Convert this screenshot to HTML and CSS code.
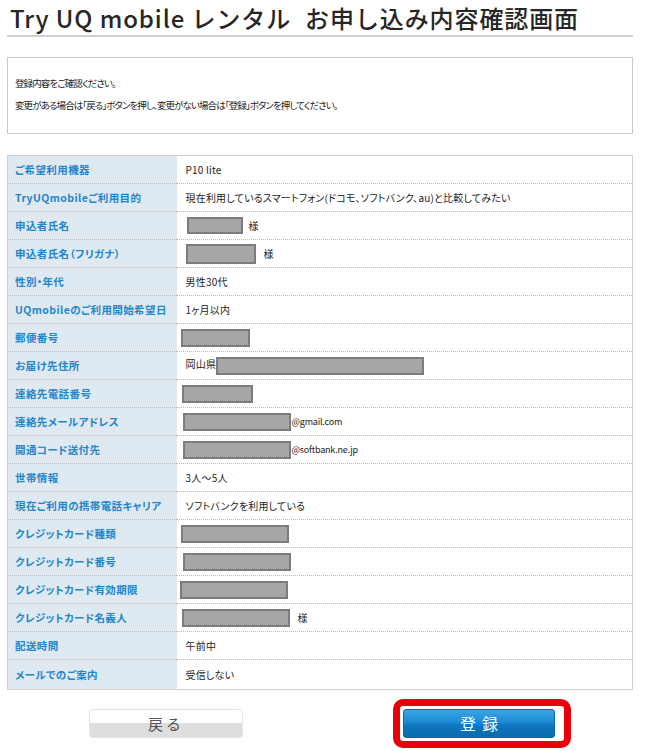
FILE: index.html
```html
<!DOCTYPE html>
<html lang="ja">
<head>
<meta charset="utf-8">
<title>Try UQ mobile レンタル お申し込み内容確認画面</title>
<link rel="stylesheet" href="styles.css">
</head>
<body>
<div class="page">
  <h1 class="title"><span>Try UQ mobile レンタル</span><span class="title-sub">お申し込み内容確認画面</span></h1>

  <div class="notice">
    <p>登録内容をご確認ください。</p>
    <p>変更がある場合は「戻る」ボタンを押し、変更がない場合は「登録」ボタンを押してください。</p>
  </div>

  <table class="confirm">
    <tr><th>ご希望利用機器</th><td>P10 lite</td></tr>
    <tr><th>TryUQmobileご利用目的</th><td>現在利用しているスマートフォン(ドコモ、ソフトバンク、au)と比較してみたい</td></tr>
    <tr><th>申込者氏名</th><td><span class="redact r-name"></span><span class="sama">様</span></td></tr>
    <tr><th>申込者氏名（フリガナ）</th><td><span class="redact r-kana"></span><span class="sama sama-wide">様</span></td></tr>
    <tr><th>性別・年代</th><td>男性30代</td></tr>
    <tr><th>UQmobileのご利用開始希望日</th><td>1ヶ月以内</td></tr>
    <tr><th>郵便番号</th><td><span class="redact r-zip"></span></td></tr>
    <tr><th>お届け先住所</th><td>岡山県<span class="redact r-addr"></span></td></tr>
    <tr><th>連絡先電話番号</th><td><span class="redact r-tel"></span></td></tr>
    <tr><th>連絡先メールアドレス</th><td><span class="redact r-mail"></span><span class="domain">@gmail.com</span></td></tr>
    <tr><th>開通コード送付先</th><td><span class="redact r-mail"></span><span class="domain">@softbank.ne.jp</span></td></tr>
    <tr><th>世帯情報</th><td>3人～5人</td></tr>
    <tr><th>現在ご利用の携帯電話キャリア</th><td>ソフトバンクを利用している</td></tr>
    <tr><th>クレジットカード種類</th><td><span class="redact r-card r-left"></span></td></tr>
    <tr><th>クレジットカード番号</th><td><span class="redact r-card"></span></td></tr>
    <tr><th>クレジットカード有効期限</th><td><span class="redact r-card r-lefter"></span></td></tr>
    <tr><th>クレジットカード名義人</th><td><span class="redact r-card r-left2"></span><span class="sama sama-card">様</span></td></tr>
    <tr><th>配送時間</th><td>午前中</td></tr>
    <tr class="last"><th>メールでのご案内</th><td>受信しない</td></tr>
  </table>

  <div class="actions">
    <button class="btn-back" type="button">戻る</button>
    <div class="highlight">
      <button class="btn-submit" type="button">登録</button>
    </div>
  </div>
</div>
</body>
</html>
```

FILE: styles.css
```css
* { box-sizing: border-box; }

body {
  margin: 0;
  background: #fff;
  font-family: "Noto Sans CJK JP", "Noto Sans", sans-serif;
  color: #333;
}

.page {
  width: 626px;
  margin-left: 7px;
}

.title {
  margin: 0;
  padding: 0 0 0 3px;
  font-size: 24px;
  line-height: 35px;
  font-weight: 500;
  color: #262626;
  letter-spacing: 0.9px;
  border-bottom: 2px solid #cfcfcf;
  white-space: nowrap;
}

.title-sub {
  margin-left: 14px;
}

.notice {
  margin-top: 20px;
  height: 77px;
  border: 1px solid #c9c9c9;
  padding: 14px 7px 0;
  font-size: 9.5px;
  line-height: 22px;
  color: #222;
  font-feature-settings: "palt";
  letter-spacing: -0.9px;
}

.notice p { margin: 0; }

.confirm {
  margin-top: 21px;
  width: 626px;
  border-collapse: collapse;
  border: 1px solid #cfcfcf;
}

.confirm th,
.confirm td {
  height: 28px;
  padding: 0;
  border-bottom: 1px dotted #b9b9b9;
  vertical-align: middle;
}

.confirm tr.last th,
.confirm tr.last td {
  border-bottom: none;
  height: 30px;
}

.confirm th {
  width: 169px;
  background: #dfe9f1;
  text-align: left;
  padding-left: 7px;
  font-size: 10.5px;
  font-weight: 700;
  color: #2385cc;
  font-feature-settings: "palt";
  letter-spacing: 0.4px;
  white-space: nowrap;
}

.confirm td {
  padding-left: 9px;
  font-size: 10px;
  color: #222;
  font-feature-settings: "palt";
  letter-spacing: 0.2px;
  white-space: nowrap;
}

.redact {
  display: inline-block;
  vertical-align: middle;
  height: 18px;
  background: #a6a6a6;
  border: 2px solid #7c7c7c;
}

.r-name { width: 56px; height: 17px; margin-left: 1px; }
.r-kana { width: 70px; height: 20px; }
.r-zip { width: 69px; margin-left: -5px; }
.r-addr { width: 208px; }
.r-tel { width: 71px; margin-left: -4px; }
.r-mail { width: 108px; margin-left: -3px; }
.r-card { width: 108px; margin-left: -3px; }
.r-left { margin-left: -5px; }
.r-lefter { margin-left: -6px; }
.r-left2 { margin-left: -4px; }

.sama {
  margin-left: 6px;
  vertical-align: middle;
}
.sama-wide { margin-left: 8px; }
.sama-card { margin-left: 8px; }

.domain {
  margin-left: 1px;
  font-size: 9px;
  letter-spacing: -0.2px;
  vertical-align: middle;
}

.actions {
  display: flex;
  align-items: center;
  margin-top: 9px;
  padding-left: 82px;
}

.btn-back {
  width: 154px;
  height: 29px;
  border: 1px solid #e4e4e4;
  border-radius: 4px;
  background: linear-gradient(#ffffff 0, #ffffff 50%, #dedede 50%, #dedede 100%);
  font-family: "Noto Sans CJK JP", sans-serif;
  font-size: 15px;
  color: #555;
  letter-spacing: 3px;
  padding: 0;
  line-height: 27px;
}

.highlight {
  margin-left: 150px;
  border: 7px solid #e8000b;
  border-radius: 10px;
  padding: 3px 9px 3px 3px;
}

.btn-submit {
  display: block;
  width: 152px;
  height: 29px;
  border: 1px solid #0b67a8;
  border-radius: 3px;
  background: linear-gradient(#3aa6e6 0, #1c8ad3 45%, #0f78c0 55%, #0a6aae 100%);
  font-family: "Noto Sans CJK JP", sans-serif;
  font-size: 16px;
  color: #fff;
  letter-spacing: 6px;
  padding: 0 0 0 6px;
  line-height: 27px;
}
```
